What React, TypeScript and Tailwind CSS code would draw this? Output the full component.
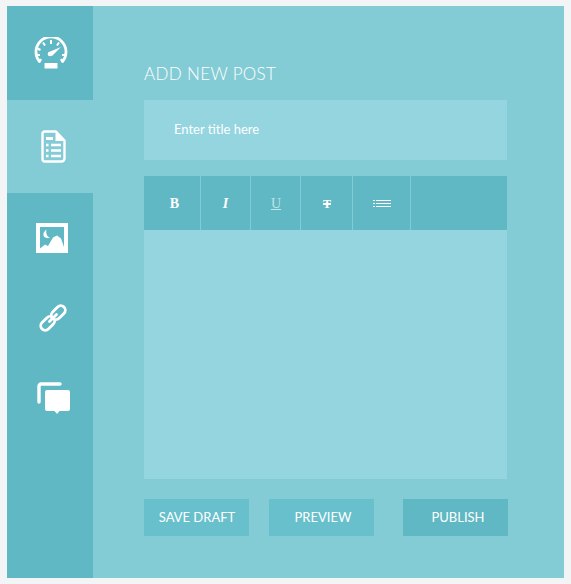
import React from "react";

function GaugeIcon() {
  return (
    <svg width="34" height="32" viewBox="0 0 34 32" fill="none" className="block">
      <path d="M5.500 24.500A15 15 0 1 1 28.500 24.500" stroke="#fff" strokeWidth="2.800" strokeLinecap="round" />
      <path d="M17 3v4M9 5.500l2 3M25 5.500l-2 3M3.500 11.500l3 1.500M2 18h4M28 18h4M4.500 24l3-1.500M29.500 24l-3-1.500" stroke="#fff" strokeWidth="2" />
      <path d="M15 15 27 10 18 19Z" fill="#fff" />
      <circle cx="16" cy="17" r="2.300" fill="#fff" />
      <rect x="10.500" y="26" width="13" height="5.500" rx="0.500" fill="#fff" />
    </svg>
  );
}

function DocIcon() {
  return (
    <svg width="25" height="33" viewBox="0 0 25 33" fill="none" className="block">
      <path d="M3.500 1.500H15L23.500 10.500V28.500a3 3 0 0 1-3 3H4a2.500 2.500 0 0 1-2.500-2.500V3.500a2 2 0 0 1 2-2Z" stroke="#fff" strokeWidth="2.400" strokeLinejoin="round" />
      <path d="M14.500 2v9H24Z" fill="#fff" />
      <rect x="5" y="7" width="7" height="3" fill="#fff" />
      <path d="M5 15h2.500M10 15h10M5 20.500h2.500M10 20.500h10M5 26h2.500M10 26h10" stroke="#fff" strokeWidth="2.500" />
    </svg>
  );
}

function ImageIcon() {
  return (
    <svg width="32" height="30" viewBox="0 0 32 30" className="block">
      <path fillRule="evenodd" fill="#fff" d="M0 0h32v30H0ZM4 4v22h24V4Z" />
      <path fill="#fff" d="M4 26 4 25.500 9 21.500 12 23 17 14.500 21 12.500 25 15.500 28 24V27H4Z" />
      <path fill="#fff" d="M10.500 6.500C8 8.500 6.500 11 8 13.500 9 15 12 15.500 14 14.500 11.500 14 9.500 11 10.500 6.500Z" />
    </svg>
  );
}

function LinkIcon() {
  return (
    <svg width="28" height="28" viewBox="0 0 28 28" fill="none" className="block">
      <g transform="rotate(-45 14 14)" stroke="#fff" strokeWidth="2.800">
        <rect x="-1.500" y="9.500" width="16" height="9" rx="4.500" />
        <rect x="13.500" y="9.500" width="16" height="9" rx="4.500" />
        <path d="M9 14h10" strokeLinecap="round" />
      </g>
    </svg>
  );
}

function CommentsIcon() {
  return (
    <svg width="33" height="33" viewBox="0 0 33 33" fill="none" className="block">
      <path d="M2 20V4a2 2 0 0 1 2-2h19" stroke="#fff" strokeWidth="3.400" strokeLinecap="round" />
      <path fill="#fff" d="M10 8h21a2 2 0 0 1 2 2V27a2 2 0 0 1-2 2H22.500l-2.500 3-2.500-3H10a2 2 0 0 1-2-2V10a2 2 0 0 1 2-2Z" />
    </svg>
  );
}

function ListIcon() {
  return (
    <svg width="18" height="8" viewBox="0 0 18 8" className="block">
      <path d="M0 .500h2M3 .500h15M0 3.500h2M3 3.500h15M0 6.500h2M3 6.500h15" stroke="#fff" strokeWidth="1" />
    </svg>
  );
}

const toolbarCell = "flex items-center justify-center border-r border-[#84ccd5] pt-[1px] text-white font-['Liberation_Serif',serif] text-[14px]";
const buttonBase = "flex h-[37px] w-[105px] items-center justify-center pt-[1px] text-[13px] text-white";

export default function App() {
  return (
    <div className="min-h-screen w-full bg-[#f3f4f6] pl-[7px] pt-[6px] font-['Lato',sans-serif]">
      <div className="flex h-[572px] w-[557px] bg-[#84ccd5]">
        {/* sidebar */}
        <div className="flex w-[86px] flex-col bg-[#5fb8c3]">
          <div className="flex h-[94px] items-center justify-center pb-[1px] pl-[2px]">
            <GaugeIcon />
          </div>
          <div className="flex h-[93px] items-center justify-center bg-[#84ccd5] pl-[6px]">
            <DocIcon />
          </div>
          <div className="mt-[5px] flex h-[80px] items-center justify-center pl-[4px]">
            <ImageIcon />
          </div>
          <div className="flex h-[80px] items-center justify-center pl-[5px]">
            <LinkIcon />
          </div>
          <div className="flex h-[80px] items-center justify-center pl-[6px]">
            <CommentsIcon />
          </div>
        </div>

        {/* main */}
        <div className="flex flex-col pl-[51px] pt-[58px]">
          <h1 className="h-[36px] text-[17px] leading-[20px] font-light tracking-[0.35px] text-white">ADD NEW POST</h1>
          <div className="flex h-[60px] w-[363px] items-center bg-[#94d5df] pl-[30px] text-[13px] text-white">
            Enter title here
          </div>
          <div className="mt-[16px] flex h-[54px] w-[363px] bg-[#5fb8c3]">
            <div className={`${toolbarCell} w-[57px] pl-[5px] font-bold`}>B</div>
            <div className={`${toolbarCell} w-[50px] font-bold italic`}>I</div>
            <div className={`${toolbarCell} w-[50px] pl-[1px]`}>
              <span className="underline text-[#bfe5ea]">U</span>
            </div>
            <div className={`${toolbarCell} w-[52px] pl-[1px] font-bold`}>
              <span className="line-through decoration-2 text-[12px]">T</span>
            </div>
            <div className={`${toolbarCell} w-[58px] pl-[1px]`}>
              <ListIcon />
            </div>
          </div>
          <div className="h-[249px] w-[363px] bg-[#94d5df]" />
          <div className="mt-[20px] flex w-[364px]">
            <div className={`${buttonBase} pl-[1px] bg-[#67c0cb]`}>SAVE DRAFT</div>
            <div className={`${buttonBase} ml-[20px] pl-[3px] text-[12.5px] bg-[#67c0cb]`}>PREVIEW</div>
            <div className={`${buttonBase} ml-[29px] pl-[5px] bg-[#5fb8c3]`}>PUBLISH</div>
          </div>
        </div>
      </div>
    </div>
  );
}
